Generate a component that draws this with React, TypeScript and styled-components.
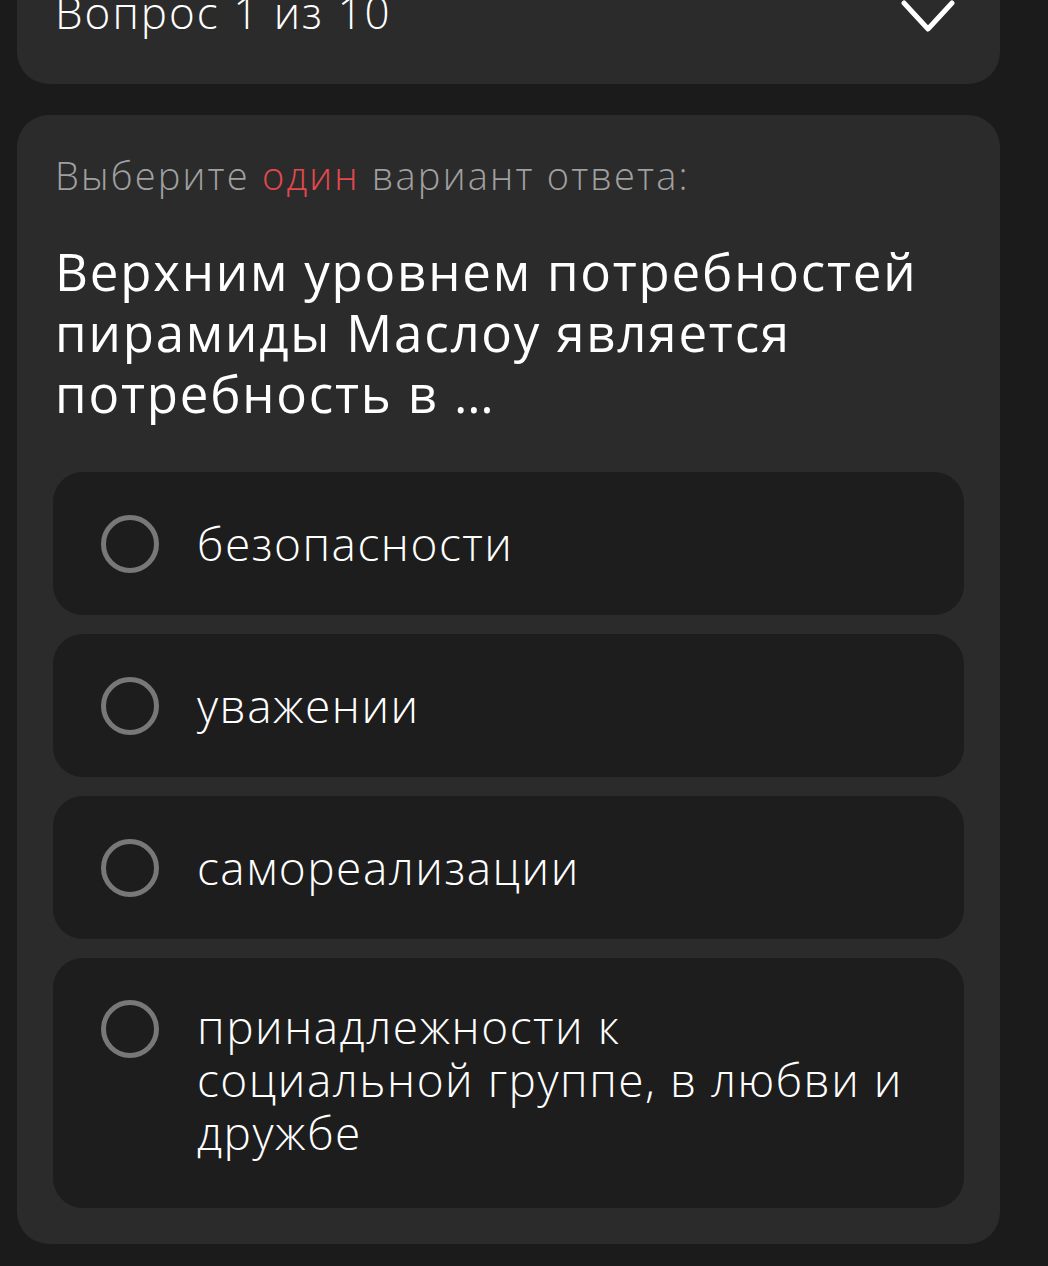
import React from 'react';
import styled, { createGlobalStyle } from 'styled-components';

const GlobalStyle = createGlobalStyle`
  html, body {
    margin: 0;
    padding: 0;
    background: #1b1b1b;
    overflow: hidden;
  }
  body {
    font-family: "Open Sans", "Noto Sans", "Liberation Sans", sans-serif;
    color: #ffffff;
  }
`;

const Page = styled.div`
  width: 983px;
  padding-left: 17px;
  display: flex;
  flex-direction: column;
  gap: 31px;
`;

const HeaderCard = styled.div`
  margin-top: -60px;
  height: 144px;
  box-sizing: border-box;
  background: #2b2b2b;
  border-radius: 0 0 32px 32px;
  padding: 42px 44px 0 38px;
  display: flex;
  justify-content: space-between;
  align-items: flex-start;
`;

const HeaderTitle = styled.div`
  font-size: 44px;
  font-weight: 300;
  line-height: 60px;
  letter-spacing: 2px;
`;

const Chevron = styled.svg`
  width: 56px;
  height: 36px;
  margin-top: 17px;
`;

const QuestionCard = styled.div`
  background: #2b2b2b;
  border-radius: 32px;
  padding: 36px;
  display: flex;
  flex-direction: column;
`;

const Hint = styled.div`
  font-size: 38px;
  font-weight: 300;
  color: #a0a0a0;
  line-height: 48px;
  letter-spacing: 2.2px;
  padding-left: 2px;
`;

const Accent = styled.span`
  color: #e5484d;
`;

const Question = styled.div`
  margin-top: 42px;
  font-size: 51px;
  font-weight: 500;
  line-height: 61px;
  letter-spacing: 1.8px;
  padding-left: 2px;
`;

const Options = styled.div`
  margin-top: 48px;
  display: flex;
  flex-direction: column;
  gap: 19px;
`;

const Option = styled.label<{ tall?: boolean }>`
  background: #1d1d1d;
  border-radius: 30px;
  min-height: 143px;
  box-sizing: border-box;
  padding: ${p => (p.tall ? '42px 20px 49px 48px' : '0 20px 0 48px')};
  display: flex;
  align-items: ${p => (p.tall ? 'flex-start' : 'center')};
  gap: 38px;
`;

const Radio = styled.span`
  flex: none;
  width: 48px;
  height: 48px;
  border: 5px solid #787878;
  border-radius: 50%;
`;

const OptionText = styled.span`
  font-size: 46px;
  font-weight: 300;
  line-height: 53px;
  letter-spacing: 1.5px;
  white-space: nowrap;
`;

const answers: React.ReactNode[] = [
  'безопасности',
  'уважении',
  'самореализации',
  <>
    принадлежности к<br />
    социальной группе, в любви и<br />
    дружбе
  </>,
];

export default function App() {
  return (
    <>
      <GlobalStyle />
      <Page>
        <HeaderCard>
          <HeaderTitle>Вопрос 1 из 10</HeaderTitle>
          <Chevron viewBox="0 0 56 36">
            <path
              d="M4 4 L28 30 L52 4"
              fill="none"
              stroke="#ffffff"
              strokeWidth="5"
              strokeLinecap="round"
              strokeLinejoin="round"
            />
          </Chevron>
        </HeaderCard>
        <QuestionCard>
          <Hint>
            Выберите <Accent>один</Accent> вариант ответа:
          </Hint>
          <Question>
            Верхним уровнем потребностей
            <br />
            пирамиды Маслоу является
            <br />
            потребность в …
          </Question>
          <Options>
            {answers.map((a, i) => {
              const tall = i === answers.length - 1;
              return (
                <Option key={i} tall={tall}>
                  <Radio />
                  <OptionText>{a}</OptionText>
                </Option>
              );
            })}
          </Options>
        </QuestionCard>
      </Page>
    </>
  );
}
